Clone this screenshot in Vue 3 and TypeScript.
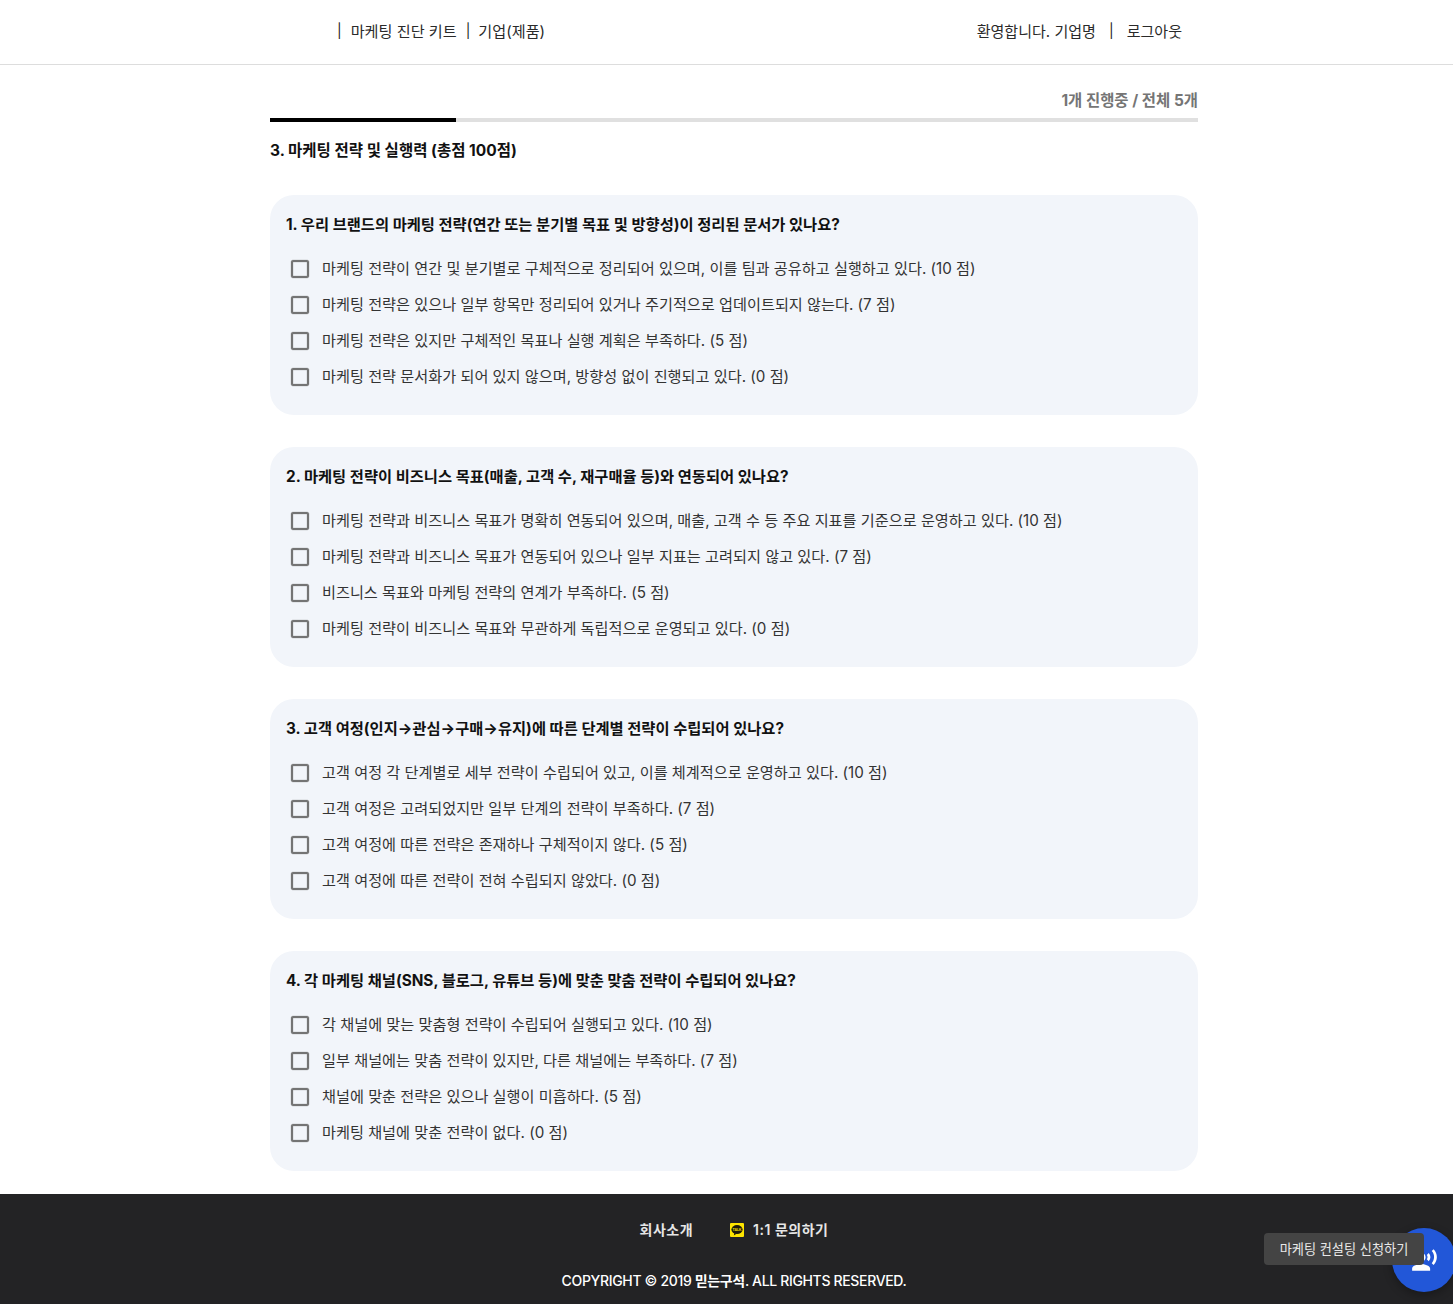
<script setup lang="ts">
interface Question {
  title: string
  options: string[]
}

const questions: Question[] = [
  {
    title: '1. 우리 브랜드의 마케팅 전략(연간 또는 분기별 목표 및 방향성)이 정리된 문서가 있나요?',
    options: [
      '마케팅 전략이 연간 및 분기별로 구체적으로 정리되어 있으며, 이를 팀과 공유하고 실행하고 있다. (10 점)',
      '마케팅 전략은 있으나 일부 항목만 정리되어 있거나 주기적으로 업데이트되지 않는다. (7 점)',
      '마케팅 전략은 있지만 구체적인 목표나 실행 계획은 부족하다. (5 점)',
      '마케팅 전략 문서화가 되어 있지 않으며, 방향성 없이 진행되고 있다. (0 점)',
    ],
  },
  {
    title: '2. 마케팅 전략이 비즈니스 목표(매출, 고객 수, 재구매율 등)와 연동되어 있나요?',
    options: [
      '마케팅 전략과 비즈니스 목표가 명확히 연동되어 있으며, 매출, 고객 수 등 주요 지표를 기준으로 운영하고 있다. (10 점)',
      '마케팅 전략과 비즈니스 목표가 연동되어 있으나 일부 지표는 고려되지 않고 있다. (7 점)',
      '비즈니스 목표와 마케팅 전략의 연계가 부족하다. (5 점)',
      '마케팅 전략이 비즈니스 목표와 무관하게 독립적으로 운영되고 있다. (0 점)',
    ],
  },
  {
    title: '3. 고객 여정(인지→관심→구매→유지)에 따른 단계별 전략이 수립되어 있나요?',
    options: [
      '고객 여정 각 단계별로 세부 전략이 수립되어 있고, 이를 체계적으로 운영하고 있다. (10 점)',
      '고객 여정은 고려되었지만 일부 단계의 전략이 부족하다. (7 점)',
      '고객 여정에 따른 전략은 존재하나 구체적이지 않다. (5 점)',
      '고객 여정에 따른 전략이 전혀 수립되지 않았다. (0 점)',
    ],
  },
  {
    title: '4. 각 마케팅 채널(SNS, 블로그, 유튜브 등)에 맞춘 맞춤 전략이 수립되어 있나요?',
    options: [
      '각 채널에 맞는 맞춤형 전략이 수립되어 실행되고 있다. (10 점)',
      '일부 채널에는 맞춤 전략이 있지만, 다른 채널에는 부족하다. (7 점)',
      '채널에 맞춘 전략은 있으나 실행이 미흡하다. (5 점)',
      '마케팅 채널에 맞춘 전략이 없다. (0 점)',
    ],
  },
]
</script>

<template>
  <div class="page">
    <header class="header">
      <div class="nav-left">
        <span class="bar">|</span>
        <span>마케팅 진단 키트</span>
        <span class="bar">|</span>
        <span class="nudge">기업(제품)</span>
      </div>
      <div class="nav-right">
        <span>환영합니다. 기업명</span>
        <span class="bar">|</span>
        <span>로그아웃</span>
      </div>
    </header>

    <main class="main">
      <div class="progress-label">1개 진행중 / 전체 5개</div>
      <div class="track"><div class="fill" style="width: 20%"></div></div>
      <h2 class="section-title">3. 마케팅 전략 및 실행력 (총점 100점)</h2>

      <section v-for="q in questions" :key="q.title" class="card">
        <h3 class="q-title">{{ q.title }}</h3>
        <ul class="options">
          <li v-for="opt in q.options" :key="opt" class="option">
            <svg class="check" viewBox="0 0 24 24" width="24" height="24" aria-hidden="true">
              <path d="M19 5v14H5V5h14m0-2H5c-1.1 0-2 .9-2 2v14c0 1.1.9 2 2 2h14c1.1 0 2-.9 2-2V5c0-1.1-.9-2-2-2z" />
            </svg>
            <span>{{ opt }}</span>
          </li>
        </ul>
      </section>
    </main>

    <footer class="footer">
      <div class="foot-links">
        <span>회사소개</span>
        <span class="kakao">
          <svg class="kakao-icon" viewBox="0 0 14 14" width="14" height="14" aria-hidden="true">
            <rect width="14" height="14" rx="1" fill="#fee500" />
            <ellipse cx="7" cy="6.6" rx="5.6" ry="4.5" fill="#1c1a0a" />
            <path d="M4.4 10 3.8 12.6 6.6 10.8z" fill="#1c1a0a" />
            <text x="7" y="7.9" text-anchor="middle" class="talk">TALK</text>
          </svg>
          1:1 문의하기
        </span>
      </div>
      <div class="copyright">COPYRIGHT © 2019 <b class="brand">믿는구석</b>. ALL RIGHTS RESERVED.</div>
    </footer>

    <div class="fab">
      <svg viewBox="0 0 24 24" width="27" height="27" aria-hidden="true">
        <path
          fill="#fff"
          d="M9 13c2.21 0 4-1.79 4-4s-1.79-4-4-4-4 1.79-4 4 1.79 4 4 4zm0 2c-2.67 0-8 1.34-8 4v2h16v-2c0-2.66-5.33-4-8-4zm6.76-9.64-1.68 1.69c.84 1.18.84 2.71 0 3.89l1.68 1.69c2.02-2.02 2.02-5.07 0-7.27zM20.07 2l-1.63 1.63c2.77 3.02 2.77 7.56 0 10.74L20.07 16c3.9-3.89 3.91-9.95 0-14z"
        />
      </svg>
    </div>
    <div class="fab-label">마케팅 컨설팅 신청하기</div>
  </div>
</template>

<style scoped>
.page {
  position: relative;
  width: 1453px;
  height: 1304px;
  overflow: hidden;
  background: #fff;
  color: #222;
  font-family: Inter, "Noto Sans CJK KR", sans-serif;
}
.header {
  box-sizing: border-box;
  height: 65px;
  border-bottom: 1px solid #ddd;
  padding: 0 271px 4px 337px;
  display: flex;
  align-items: center;
  justify-content: space-between;
  font-size: 15.15px;
  color: #2a2a2a;
}
.nav-left,
.nav-right {
  display: flex;
  align-items: center;
}
.nav-left {
  gap: 9px;
}
.nudge {
  margin-left: -1px;
}
.nav-right {
  gap: 13px;
  font-size: 15.05px;
}
.bar {
  font-size: 14px;
  color: #222;
}
.main {
  box-sizing: border-box;
  width: 928px;
  margin-left: 270px;
  height: 1129px;
  padding-top: 25px;
}
.progress-label {
  text-align: right;
  font-size: 15.45px;
  font-weight: 700;
  line-height: 22px;
  color: #757575;
}
.track {
  height: 4px;
  margin-top: 6px;
  background: #e0e0e0;
}
.fill {
  height: 100%;
  background: #000;
}
.section-title {
  margin: 19px 0 0;
  font-size: 15.5px;
  font-weight: 700;
  line-height: 20px;
  color: #111;
}
.card {
  box-sizing: border-box;
  height: 220px;
  margin-top: 32px;
  padding: 19px 16px 0;
  border-radius: 24px;
  background: #f2f5fa;
}
.section-title + .card {
  margin-top: 34px;
}
.q-title {
  margin: 0;
  font-size: 15.32px;
  font-weight: 700;
  line-height: 22px;
  color: #111;
}
.options {
  list-style: none;
  margin: 13px 0 0;
  padding: 0;
}
.option {
  height: 36px;
  display: flex;
  align-items: center;
  gap: 10px;
  font-size: 15.18px;
  color: #333;
}
.check {
  flex: none;
  margin: 4px 0 0 2px;
  fill: #757575;
  stroke: #757575;
  stroke-width: 0.25;
}
.footer {
  box-sizing: border-box;
  height: 110px;
  background: #232325;
  color: #fff;
  text-align: center;
  padding: 26px 0 0 15px;
}
.foot-links {
  display: flex;
  justify-content: center;
  gap: 37px;
  font-size: 14px;
  font-weight: 600;
  letter-spacing: 0.5px;
  line-height: 20px;
  color: #e6e6e6;
}
.kakao {
  display: flex;
  align-items: center;
  gap: 9px;
}
.talk {
  font-size: 3.4px;
  font-weight: 700;
  letter-spacing: 0;
  fill: #fee500;
}
.copyright {
  margin-top: 31px;
  font-size: 14px;
  font-weight: 500;
  letter-spacing: -0.34px;
  line-height: 20px;
}
.brand {
  font-weight: 700;
}
.fab {
  position: absolute;
  left: 1392px;
  top: 1228px;
  width: 64px;
  height: 64px;
  border-radius: 50%;
  background: #2257d8;
  box-shadow: 0 3px 10px rgba(0, 0, 0, 0.3);
  display: flex;
  align-items: center;
  justify-content: center;
}
.fab-label {
  position: absolute;
  left: 1264px;
  top: 1233px;
  width: 160px;
  height: 32px;
  border-radius: 4px;
  background: #444;
  color: #e8e8e8;
  font-size: 13.2px;
  line-height: 32px;
  text-align: center;
}
</style>
